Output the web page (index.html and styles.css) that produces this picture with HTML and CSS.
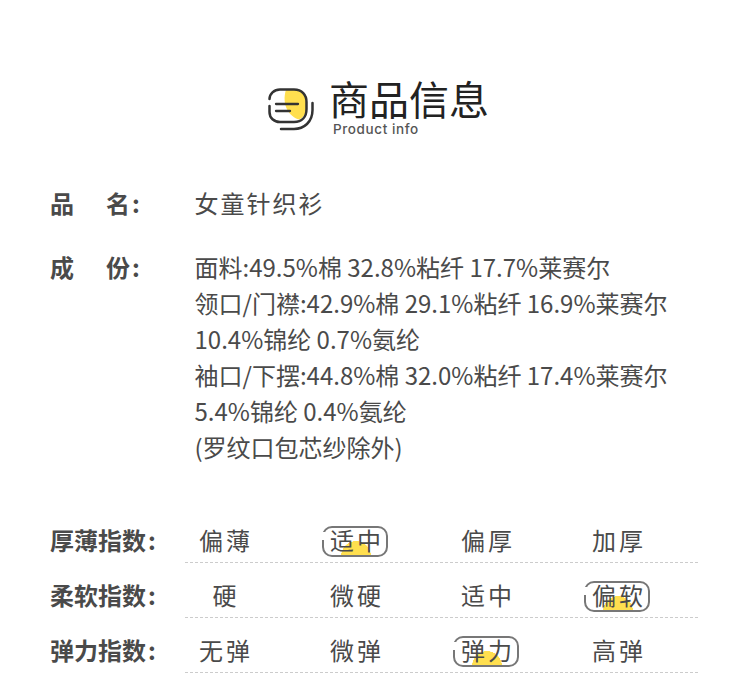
FILE: index.html
```html
<!DOCTYPE html>
<html lang="zh">
<head>
<meta charset="utf-8">
<title>商品信息</title>
<link rel="stylesheet" href="styles.css">
</head>
<body>
<main class="page">
  <header class="head">
    <svg class="head-icon" width="50" height="46" viewBox="0 0 50 46" aria-hidden="true">
      <path d="M20 3.500 H28 C36 3.500 40 9 40 16 V23 C40 28 37 32 33 33.500 C24 31 15 20 20 3.500 Z" fill="#ffdf4f"/>
      <path d="M3.500 13 C3.500 8 8 3.500 14 3.500 H28 C36 3.500 40.500 9 40.500 16 V23 C40.500 31 36 36 28 36 H14 C8 36 3.500 32 3.500 26 V20" fill="none" stroke="#333" stroke-width="2.500" stroke-linecap="round"/>
      <path d="M10 18 H32 M10 25 H24" fill="none" stroke="#333" stroke-width="2.300" stroke-linecap="round"/>
      <path d="M46.500 17 V24 C46.500 36 38 43 28 43 H15" fill="none" stroke="#333" stroke-width="2.500" stroke-linecap="round"/>
    </svg>
    <div class="head-text">
      <h1 class="head-title">商品信息</h1>
      <p class="head-sub">Product info</p>
    </div>
  </header>

  <section class="info">
    <div class="info-row name-row">
      <div class="info-label"><span>品</span><span>名<i class="colon">:</i></span></div>
      <div class="info-name">女童针织衫</div>
    </div>
    <div class="info-row">
      <div class="info-label"><span>成</span><span>份<i class="colon">:</i></span></div>
      <div class="info-body">
        <div>面料:49.5%棉 32.8%粘纤 17.7%莱赛尔</div>
        <div>领口/门襟:42.9%棉 29.1%粘纤 16.9%莱赛尔</div>
        <div>10.4%锦纶 0.7%氨纶</div>
        <div>袖口/下摆:44.8%棉 32.0%粘纤 17.4%莱赛尔</div>
        <div>5.4%锦纶 0.4%氨纶</div>
        <div>(罗纹口包芯纱除外)</div>
      </div>
    </div>
  </section>

  <section class="scales">
    <div class="scale">
      <div class="scale-label">厚薄指数<i class="colon">:</i></div>
      <div class="scale-opts">
        <span class="opt">偏薄</span>
        <span class="opt on">适中</span>
        <span class="opt">偏厚</span>
        <span class="opt">加厚</span>
      </div>
    </div>
    <div class="scale">
      <div class="scale-label">柔软指数<i class="colon">:</i></div>
      <div class="scale-opts">
        <span class="opt">硬</span>
        <span class="opt">微硬</span>
        <span class="opt">适中</span>
        <span class="opt on">偏软</span>
      </div>
    </div>
    <div class="scale">
      <div class="scale-label">弹力指数<i class="colon">:</i></div>
      <div class="scale-opts">
        <span class="opt">无弹</span>
        <span class="opt">微弹</span>
        <span class="opt on">弹力</span>
        <span class="opt">高弹</span>
      </div>
    </div>
  </section>
</main>
</body>
</html>
```
FILE: styles.css
```css
* { box-sizing: border-box; }
html, body { margin: 0; padding: 0; background: #fff; }
body {
  width: 750px;
  height: 678px;
  overflow: hidden;
  font-family: "Noto Sans CJK SC", "Noto Sans", sans-serif;
  color: #4a4a4a;
}
.page { padding: 72px 52px 0 50px; }

.head { display: flex; align-items: flex-start; padding-left: 216px; }
.head-icon { margin: 14px 13px 0 0; flex: none; }
.head-text { display: flex; flex-direction: column; }
.head-title {
  margin: 0;
  font-size: 40px;
  line-height: 52px;
  font-weight: 400;
  color: #222;
}
.head-sub {
  margin: -3px 0 0 4px;
  font-family: "Inter", sans-serif;
  font-size: 13.500px;
  line-height: 16px;
  font-weight: 500;
  letter-spacing: 0.600px;
  color: #555;
}

.info { margin-top: 48px; }
.info-row { display: flex; font-size: 24px; line-height: 36px; }
.name-row { margin-bottom: 28px; }
.info-label {
  flex: none;
  width: 145px;
  display: flex;
  font-weight: 700;
  gap: 32px;
}
.info-name, .info-body { margin-left: -0.500px; }
.info-name { letter-spacing: 2px; }
.colon { font-style: normal; margin-left: 2px; }

.scales { margin-top: 57px; }
.scale { display: flex; align-items: flex-start; height: 55px; }
.scale-label {
  flex: none;
  width: 135px;
  font-size: 24px;
  line-height: 36px;
  font-weight: 700;
  white-space: nowrap;
}
.scale-opts {
  flex: 1;
  display: flex;
  gap: 53px;
  height: 41px;
  border-bottom: 1px dashed #ccc;
  font-size: 24px;
}
.opt {
  position: relative;
  flex: none;
  width: 78px;
  height: 36px;
  line-height: 36px;
  text-align: center;
  letter-spacing: 3px;
  text-indent: 4px;
  white-space: nowrap;
  z-index: 0;
}
.opt.on::before {
  content: "";
  position: absolute;
  left: 6px;
  right: 6px;
  top: 4px;
  height: 27px;
  border: 2px solid #777;
  border-radius: 10px;
  background: radial-gradient(circle 15px at calc(50% + 1px) 28px, #ffdf4f 98%, transparent 100%);
  z-index: -1;
}
.opt.on::after {
  content: "";
  position: absolute;
  left: 5px;
  top: 10px;
  width: 4px;
  height: 8px;
  background: #fff;
  z-index: -1;
}
```
